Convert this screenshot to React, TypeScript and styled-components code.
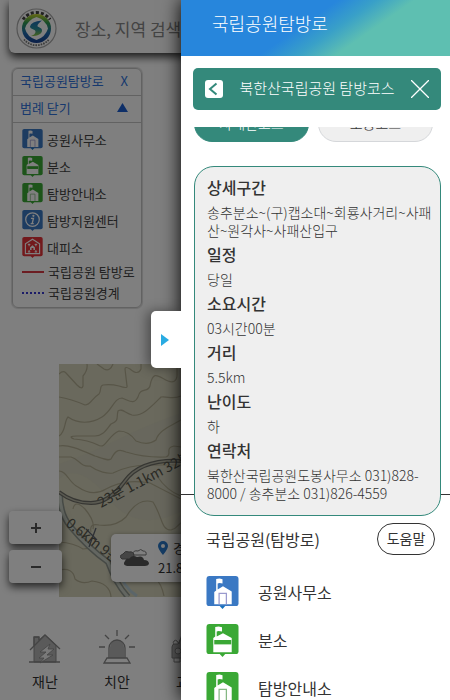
import React from "react";
import styled, { createGlobalStyle } from "styled-components";

const GlobalStyle = createGlobalStyle`
  * { box-sizing: border-box; }
  body {
    margin: 0;
    background: #fff;
    color: #333;
    font-family: "Noto Sans CJK KR", "Noto Sans", sans-serif;
  }
  button, input { font: inherit; color: inherit; margin: 0; padding: 0; border: 0; background: none; }
  button { cursor: pointer; }
  h1, h2, h3, p, ul, dl, dt, dd { margin: 0; padding: 0; }
  ul { list-style: none; }
`;

const Screen = styled.div`
  position: relative;
  height: 100vh;
  overflow: hidden;
`;

const MapPage = styled.main`
  display: flex;
  flex-direction: column;
`;

const SearchBar = styled.form`
  display: flex;
  align-items: center;
  gap: 18px;
  height: 53px;
  margin: 0 9px;
  padding: 4px 7px 0;
  background: #fff;
  border-radius: 0 0 6px 6px;
  box-shadow: 0 4px 8px rgba(0, 0, 0, 0.8);
`;

const SearchInput = styled.input`
  flex: 1;
  min-width: 0;
  font-size: 17px;
  outline: none;
  &::placeholder { color: #888; opacity: 1; }
`;

const Legend = styled.section`
  width: 130px;
  margin: 15px 0 0 12px;
  border: 1px solid #c4c4c4;
  border-radius: 6px;
  box-shadow: 0 0 1px 1px #dcdcdc;
  color: #444;
  font-size: 13px;
`;

const LegendHead = styled.button`
  display: flex;
  justify-content: space-between;
  align-items: center;
  width: 100%;
  height: 27px;
  padding: 0 13px 3px 7px;
  border-bottom: 1px solid #c4c4c4;
  color: #2f73dc;
  text-align: left;
`;

const LegendList = styled.ul`
  padding: 3px 0 4px;
`;

const LegendItem = styled.li<{ $line?: boolean }>`
  display: flex;
  align-items: center;
  gap: 4px;
  height: ${(p) => (p.$line ? 21 : 27)}px;
  padding-left: 9px;
  white-space: nowrap;
  svg { flex: none; }
`;

const LineMark = styled.span<{ $dotted?: boolean }>`
  width: 22px;
  border-top: 2px ${(p) => (p.$dotted ? "dotted #3838d0" : "solid #d83a44")};
`;

const MapArea = styled.section`
  position: relative;
  height: 233px;
  margin-top: 56px;
  padding-left: 59px;
`;

const MapSvg = styled.svg`
  display: block;
  width: 100%;
  height: 100%;
`;

const ZoomControls = styled.div`
  position: absolute;
  left: 9px;
  bottom: 14px;
  display: grid;
  gap: 6px;
`;

const ZoomButton = styled.button`
  display: grid;
  place-items: center;
  width: 53px;
  height: 33px;
  background: #fff;
  border-radius: 4px;
  box-shadow: 0 4px 8px rgba(0, 0, 0, 0.7);
`;

const Weather = styled.aside`
  position: absolute;
  left: 111px;
  right: 9px;
  bottom: 15px;
  display: flex;
  align-items: center;
  gap: 9px;
  height: 48px;
  padding-left: 9px;
  background: #fff;
  border-radius: 5px;
  box-shadow: 0 1px 4px rgba(0, 0, 0, 0.4);
  font-size: 13px;
  line-height: 20px;
`;

const Place = styled.div`
  display: flex;
  align-items: center;
  gap: 5px;
`;

const Nav = styled.nav`
  display: grid;
  grid-template-columns: repeat(6, 1fr);
  padding: 33px 9px 0;
`;

const NavButton = styled.button`
  display: flex;
  flex-direction: column;
  align-items: center;
  gap: 7px;
  font-size: 14px;
  line-height: 20px;
`;

const Dim = styled.div`
  position: absolute;
  inset: 0;
  background: rgba(0, 0, 0, 0.5);
`;

const Drawer = styled.aside`
  position: absolute;
  top: 0;
  bottom: 0;
  left: 181px;
  right: 0;
  background: #fff;
  box-shadow: 0 0 18px rgba(0, 0, 0, 1);
`;

const DrawerTab = styled.button`
  position: absolute;
  top: 311px;
  left: -30px;
  display: grid;
  place-items: center start;
  width: 30px;
  height: 57px;
  padding-left: 10px;
  background: #fff;
  border-radius: 5px 0 0 5px;
  box-shadow: -4px 0 12px rgba(0, 0, 0, 0.4);
`;

const DrawerBody = styled.div`
  position: relative;
  height: 100%;
  overflow: hidden;
  background: #fff;
`;

const DrawerTitle = styled.h1`
  height: 56px;
  padding-left: 31px;
  background: linear-gradient(145deg, #2786dc 45%, #39a0c8 56%, #5ebfb1 67%);
  color: #fff;
  font-size: 18px;
  font-weight: 300;
  line-height: 47px;
`;

const CourseBar = styled.header`
  display: flex;
  align-items: center;
  justify-content: space-between;
  height: 42px;
  margin: 12px 9px 0 12px;
  padding: 0 12px;
  background: #34897b;
  border-radius: 5px;
  color: #fff;
`;

const IconButton = styled.button`
  display: grid;
  place-items: center;
`;

const CourseTitle = styled.h2`
  font-size: 15px;
  font-weight: 300;
  line-height: 20px;
  padding-bottom: 2px;
  white-space: nowrap;
`;

const Detail = styled.section`
  padding: 17px 9px 0 13px;
  border-bottom: 1px solid #333;
`;

const CourseTabs = styled.div`
  display: flex;
  align-items: flex-end;
  gap: 9px;
  height: 15px;
  padding-right: 8px;
  overflow: hidden;
`;

const CourseTab = styled.button<{ $active?: boolean }>`
  flex: 1;
  height: 36px;
  padding-bottom: 2px;
  border: 1px solid ${(p) => (p.$active ? "#34897b" : "#d5d7da")};
  border-radius: 18px;
  background: ${(p) => (p.$active ? "#34897b" : "#efefef")};
  color: ${(p) => (p.$active ? "#fff" : "#333")};
  font-size: 14px;
  font-weight: 300;
`;

const InfoCard = styled.dl`
  position: relative;
  margin: 24px 0 -22px;
  padding: 5px 8px 13px 12px;
  background: #efefef;
  border: 1px solid #34897b;
  border-radius: 20px;
`;

const InfoName = styled.dt`
  font-size: 16px;
  font-weight: 500;
  line-height: 31px;
`;

const InfoText = styled.dd`
  font-size: 14px;
  font-weight: 300;
  line-height: 18px;
`;

const ParkHead = styled.div`
  display: flex;
  align-items: center;
  justify-content: space-between;
  padding: 28px 15px 0 25px;
`;

const ParkTitle = styled.h2`
  font-size: 16px;
  font-weight: 400;
`;

const HelpButton = styled.button`
  width: 58px;
  height: 32px;
  padding-bottom: 2px;
  border: 1px solid #333;
  border-radius: 16px;
  font-size: 14px;
`;

const ParkList = styled.ul`
  padding: 13px 25px 0;
`;

const ParkItem = styled.li`
  display: flex;
  align-items: center;
  gap: 19px;
  height: 48px;
  font-size: 16px;
  svg { flex: none; }
`;

type Kind = "office" | "branch" | "guide" | "center" | "shelter";

const markColor: Record<Kind, string> = {
  office: "#3a78c3",
  branch: "#3aa835",
  guide: "#3aa835",
  center: "#3a78c3",
  shelter: "#e53238",
};

function Mark({ kind, size }: { kind: Kind; size: number }) {
  const c = markColor[kind];
  const pin = kind === "office" ? "#1670bd" : c;
  return (
    <svg width={size} height={size} viewBox="0 0 33 34" aria-hidden="true">
      <path d="M12 29h9l-4.500 5z" fill={pin} />
      <rect width="33" height="31" rx="3" fill={c} />
      {(kind === "office" || kind === "guide") && (
        <>
          <path d="M10 3l3.500-.4 3 .8v4.400l-3-.6-2 .4v6.200l5.500-3.300 9 5.500V29H8V16.500l2-1.500z" fill="#fff" />
          <path d="M13 29V18h7.500v11" fill="none" stroke={kind === "office" ? "#9a9ace" : "#85b883"} strokeWidth="1.300" />
        </>
      )}
      {kind === "branch" && (
        <>
          <path d="M9 3l3.500-.4 3.500.8v4.400l-3.500-.6-2 .4v5.400L17 9.500l9 5V29H7V14.500L9 13z" fill="#fff" />
          <path d="M8 16.500h17.500V21H8z" fill={c} />
        </>
      )}
      {kind === "center" && (
        <>
          <circle cx="16.500" cy="15.500" r="11" fill="none" stroke="#fff" strokeWidth="2" />
          <circle cx="18" cy="9.500" r="1.800" fill="#fff" />
          <path d="M14 13.500h4l-2 8.500h2.500M13.500 22H16" fill="none" stroke="#fff" strokeWidth="2.200" />
        </>
      )}
      {kind === "shelter" && (
        <>
          <path d="M5 27V11l11.500-7.500L28 11v16z" fill="none" stroke="#fff" strokeWidth="1.800" />
          <path d="M9 12h4M20 12h4M9 24h4M20 24h4M11 11v4M22 11v4M11 25v-4M22 25v-4" stroke="#fff" strokeWidth="1.600" />
          <path d="M12.500 17l4-3.500 4 3.500v4h-2.500v-3h-3v3h-2.500z" fill="#fff" />
        </>
      )}
    </svg>
  );
}

function Logo() {
  return (
    <svg width="41" height="41" viewBox="0 0 41 41" role="img" aria-label="로고">
      <defs>
        <linearGradient id="emblem" x1="0" y1="0" x2="0" y2="1">
          <stop offset="0" stopColor="#c9d42c" />
          <stop offset=".3" stopColor="#319b50" />
          <stop offset=".65" stopColor="#1d6aae" />
          <stop offset="1" stopColor="#173f91" />
        </linearGradient>
        <linearGradient id="stream" x1="0" y1="0" x2="0" y2="1">
          <stop offset="0" stopColor="#1d6ab8" />
          <stop offset=".55" stopColor="#2a8e9c" />
          <stop offset="1" stopColor="#8cc63f" />
        </linearGradient>
      </defs>
      <circle cx="20.500" cy="20.500" r="19.500" fill="#fff" stroke="#aaa" strokeWidth="1.200" />
      <path d="M7 11.500a16.500 16.500 0 0 1 27 0" fill="none" stroke="#444" strokeWidth="3" strokeDasharray="3 2" />
      <path d="M8 31.500a16.500 16.500 0 0 0 25 0" fill="none" stroke="#777" strokeWidth="1.800" strokeDasharray="1.600 1" />
      <circle cx="20.500" cy="20.500" r="14.500" fill="url(#emblem)" />
      <path d="M20.500 9Q30 12 32 20.500 29.500 29 20.500 32 11 29 9 20.500 11.500 12 20.500 9z" fill="#fff" />
      <path d="M26 12.500q-11 1-12 6c0 3 6 2.500 5.500 5.500-.3 2-2 3-4.500 4 7 0 11-2 11-5.500 0-3.500-5-3-4.500-5 .4-1.500 2.500-3.500 4.500-5z" fill="url(#stream)" />
    </svg>
  );
}

function ParkMap() {
  return (
    <MapSvg viewBox="0 0 391 233" preserveAspectRatio="xMinYMin slice" aria-label="지도">
      <rect width="391" height="233" fill="#d4d2ba" />
      <path d="M0 100q30-10 60-25t60-25V0h271v233H130q-40-60 0-90-50 30-80-8t-50-20z" fill="#cbccba" opacity=".5" />
      <g fill="none" stroke="#b0ab90" strokeWidth="1.200">
        <path d="M0 10q4-4 7-1l11 12q5 5 6 1V12q5-6 4-12M38 0l7 5q6 3 9-5M66 5q0-3 5 0 8 7 11 0V0M66 5l2 17q1 3-8 0-8-2-16-1c-4 1-1 5-4 9-8 5-8 11-14 11Q12 35 0 33" />
        <path d="M0 72c7-4 5-15 9-19 10 7 23 7 34 0 10-6 12-19 20-19 8 3 12 7 16-1 2-10 10-4 12-11 3-18 10-8 18-5q8 3 9-5V0" />
        <path d="M122 32c-9 4-13 0-20 1-10 10-19 20-29 18-7-2-10-7-14-4-2 7 2 9-7 13-5 6-8 12-16 12H18q-10 0-3 3 14 1 24 6c8 5 10-10 21-14q10 0 17 10 12 5 20-1c3-10 15-14 25-20" />
        <path d="M0 82c9-2 22 4 36 10 9 3 13 5 16 3 5-10 9-10 15-7q20 6 40 5c7-2-2-9 8-11l7 1M0 93h12c8 2 9 10 19 9 8 6 18 8 23 7 10-5 23-8 36-8h32" />
        <path d="M0 107c8 0 10 12 19 16 10 7 20 7 28 2 17-9 31-8 44-6l31 16M32 168q-2-9 8-7 17 2 27-8 12-20 27-15c10 16 8 28 18 28 8-2 8-8 12-8" />
        <path d="M14 145q2-10 12 0 10 12 8 20M0 178q15 1 24 7 16-3 20 10 8 15 20 3M0 206q14-3 16 9 7 6 17 2 18 2 19 16M80 212q20-5 25 20M98 112q10 15 24 20" />
        <path d="M150 10c20 40 50 0 90 30s70 10 150 20M150 80c60 30 90-40 150 0s60 10 91 0M140 140c80-40 110 30 250 0" />
      </g>
      <g fill="none">
        <path d="M1 130q0 20 10 32 18 22 38 36 8 22 20 35" stroke="#8d948c" strokeWidth="6" />
        <path d="M1 130q0 20 10 32 18 22 38 36 8 22 20 35" stroke="#c6cdc2" strokeWidth="3" />
        <path d="M60 207q4 16 18 25" stroke="#b6cbd3" strokeWidth="3" />
        <path d="M0 128q14 11 32 11t34-22 56-20" stroke="#6d6d66" strokeWidth="4" />
        <path d="M0 128q14 11 32 11t34-22 56-20" stroke="#b5b4a3" strokeWidth="1.500" />
        <path d="M30 183l7-19M27 165l11 11" stroke="#5c606b" strokeWidth="1.300" />
      </g>
      <g fill="#55554b" fontSize="14">
        <text transform="translate(42 144) rotate(-28)">23분 1.1km 32분</text>
        <text transform="translate(6 161) rotate(38)">0.6km 9분</text>
      </g>
    </MapSvg>
  );
}

const details = [
  ["상세구간", "송추분소~(구)캡소대~회룡사거리~사패산~원각사~사패산입구"],
  ["일정", "당일"],
  ["소요시간", "03시간00분"],
  ["거리", "5.5km"],
  ["난이도", "하"],
  ["연락처", "북한산국립공원도봉사무소 031)828-8000 / 송추분소 031)826-4559"],
];

const marks: { kind: Kind; label: string }[] = [
  { kind: "office", label: "공원사무소" },
  { kind: "branch", label: "분소" },
  { kind: "guide", label: "탐방안내소" },
  { kind: "center", label: "탐방지원센터" },
  { kind: "shelter", label: "대피소" },
];

export default function App() {
  return (
    <Screen>
      <GlobalStyle />
      <MapPage>
        <SearchBar>
          <Logo />
          <SearchInput aria-label="검색" placeholder="장소, 지역 검색" />
        </SearchBar>

        <Legend>
          <LegendHead>국립공원탐방로 <span>X</span></LegendHead>
          <LegendHead>
            범례 닫기
            <svg width="11" height="9" viewBox="0 0 11 9" aria-hidden="true"><path d="M5.500 0L11 9H0z" fill="#1d5fd0" /></svg>
          </LegendHead>
          <LegendList>
            {marks.map((m) => (
              <LegendItem key={m.label}><Mark kind={m.kind} size={21} />{m.label}</LegendItem>
            ))}
            <LegendItem $line><LineMark />국립공원 탐방로</LegendItem>
            <LegendItem $line><LineMark $dotted />국립공원경계</LegendItem>
          </LegendList>
        </Legend>

        <MapArea>
          <ParkMap />
          <ZoomControls>
            <ZoomButton aria-label="확대">
              <svg width="12" height="12" viewBox="0 0 12 12"><path d="M6 1v10M1 6h10" stroke="#555" strokeWidth="2" /></svg>
            </ZoomButton>
            <ZoomButton aria-label="축소">
              <svg width="12" height="12" viewBox="0 0 12 12"><path d="M1 6h10" stroke="#555" strokeWidth="2" /></svg>
            </ZoomButton>
          </ZoomControls>
          <Weather>
            <svg width="29" height="18" viewBox="0 0 29 18" aria-hidden="true">
              <path d="M13 5q0-4 5-3 3-3 5 0 4 0 3 4H14z" fill="#fff" stroke="#777" />
              <path d="M2 10q-4-3 1-5 2-4 6-2 5-1 5 4-1 3-3 3z" fill="#8b8b8b" stroke="#666" />
              <path d="M7 17q-5-1-2-5 1-3 4-2 3-5 8-2 6-2 7 3 5 0 5 4-1 2-4 2z" fill="#555" />
            </svg>
            <div>
              <Place>
                <svg width="10" height="14" viewBox="0 0 10 14" aria-hidden="true">
                  <path d="M5 0a5 5 0 0 1 5 5c0 3-5 9-5 9S0 8 0 5a5 5 0 0 1 5-5zm0 3a2 2 0 1 0 0 4 2 2 0 0 0 0-4z" fill="#2b79c9" fillRule="evenodd" />
                </svg>
                경기도
              </Place>
              21.8℃
            </div>
          </Weather>
        </MapArea>

        <Nav>
          <NavButton>
            <svg width="32" height="34" viewBox="0 0 32 34" aria-hidden="true">
              <path d="M5 13V7h5v3l6-5 11 10v17H5z" fill="#b5b5b5" stroke="#888" />
              <path d="M1 20L16 5l15 14M0 32h31M5 16V7h5v4" fill="none" stroke="#888" strokeWidth="1.300" />
              <path d="M21 14l-10 8h6l-7 6h5l-4 5 13-8h-6l7-6h-6z" fill="#f2f2f2" stroke="#888" strokeWidth=".8" />
            </svg>
            재난
          </NavButton>
          <NavButton>
            <svg width="36" height="34" viewBox="0 0 36 34" aria-hidden="true">
              <path d="M11 28V17a7 7 0 0 1 14 0v11z" fill="#b5b5b5" />
              <path d="M10 28V18a8 8 0 0 1 16 0v10zM8 28h20l3 5H5zM18 0v6M6 5l4 4M30 5l-4 4M0 17h6M30 17h6" fill="none" stroke="#888" strokeWidth="1.300" />
            </svg>
            치안
          </NavButton>
          <NavButton>
            <svg width="36" height="34" viewBox="0 0 36 34" aria-hidden="true">
              <path d="M1 28V17q0-3 3-3h3l3-6h16l3 6h3q3 0 3 3v11z" fill="#b5b5b5" stroke="#888" />
              <circle cx="7" cy="21" r="3" fill="#ddd" stroke="#888" />
              <circle cx="29" cy="21" r="3" fill="#ddd" stroke="#888" />
              <path d="M3 28v4h6v-4M27 28v4h6v-4M3 14a2 2 0 1 1 3-3l2 3 3-10" fill="none" stroke="#888" />
            </svg>
            교통
          </NavButton>
        </Nav>
      </MapPage>

      <Dim />

      <Drawer>
        <DrawerTab aria-label="패널 접기">
          <svg width="8" height="12" viewBox="0 0 8 12"><path d="M0 0l8 6-8 6z" fill="#29abe2" /></svg>
        </DrawerTab>
        <DrawerBody>
          <DrawerTitle>국립공원탐방로</DrawerTitle>
          <CourseBar>
            <IconButton aria-label="뒤로">
              <svg width="18" height="18" viewBox="0 0 18 18">
                <rect width="18" height="18" rx="3" fill="#fff" />
                <path d="M11.500 3.500L5 9l6.500 5.500" fill="none" stroke="#34897b" strokeWidth="2" />
              </svg>
            </IconButton>
            <CourseTitle>북한산국립공원 탐방코스</CourseTitle>
            <IconButton aria-label="닫기">
              <svg width="18" height="18" viewBox="0 0 18 18"><path d="M0 0l18 18M18 0L0 18" stroke="#fff" strokeWidth="1.300" /></svg>
            </IconButton>
          </CourseBar>

          <Detail>
            <CourseTabs>
              <CourseTab $active>사패산코스</CourseTab>
              <CourseTab>도봉코스</CourseTab>
            </CourseTabs>
            <InfoCard>
              {details.map(([name, text]) => (
                <React.Fragment key={name}>
                  <InfoName>{name}</InfoName>
                  <InfoText>{text}</InfoText>
                </React.Fragment>
              ))}
            </InfoCard>
          </Detail>

          <ParkHead>
            <ParkTitle>국립공원(탐방로)</ParkTitle>
            <HelpButton>도움말</HelpButton>
          </ParkHead>
          <ParkList>
            {marks.slice(0, 3).map((m) => (
              <ParkItem key={m.label}><Mark kind={m.kind} size={33} />{m.label}</ParkItem>
            ))}
          </ParkList>
        </DrawerBody>
      </Drawer>
    </Screen>
  );
}
